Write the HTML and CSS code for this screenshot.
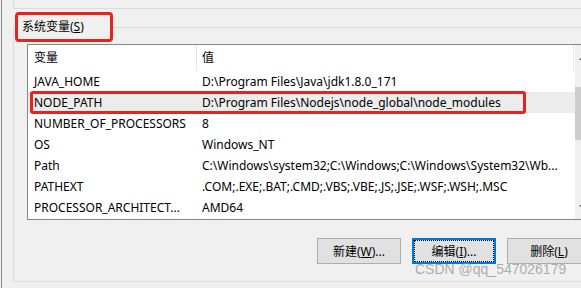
FILE: index.html
```html
<!DOCTYPE html>
<html lang="zh-CN">
<head>
<meta charset="utf-8">
<title>系统变量</title>
<link rel="stylesheet" href="styles.css">
</head>
<body>
<div class="window">
  <div class="prev-group"></div>
  <fieldset class="group">
    <legend class="group-title">系统变量(<u>S</u>)</legend>
    <div class="listview">
      <div class="lv-main">
        <div class="lv-header"><div class="col1">变量</div><div class="col2">值</div></div>
        <div class="lv-row"><div class="col1">JAVA_HOME</div><div class="col2">D:\Program Files\Java\jdk1.8.0_171</div></div>
        <div class="lv-row selected"><div class="col1">NODE_PATH</div><div class="col2">D:\Program Files\Nodejs\node_global\node_modules</div><span class="highlight"></span></div>
        <div class="lv-row"><div class="col1">NUMBER_OF_PROCESSORS</div><div class="col2">8</div></div>
        <div class="lv-row"><div class="col1">OS</div><div class="col2">Windows_NT</div></div>
        <div class="lv-row"><div class="col1">Path</div><div class="col2">C:\Windows\system32;C:\Windows;C:\Windows\System32\Wb...</div></div>
        <div class="lv-row"><div class="col1">PATHEXT</div><div class="col2">.COM;.EXE;.BAT;.CMD;.VBS;.VBE;.JS;.JSE;.WSF;.WSH;.MSC</div></div>
        <div class="lv-row"><div class="col1">PROCESSOR_ARCHITECT...</div><div class="col2">AMD64</div></div>
      </div>
      <div class="scrollbar">
        <div class="sb-btn sb-up"><svg width="9" height="5" viewBox="0 0 9 5"><polygon points="0,5 4.5,0 9,5" fill="#606060"/></svg></div>
        <div class="sb-track"><div class="sb-thumb"></div></div>
        <div class="sb-btn sb-down"><svg width="9" height="5" viewBox="0 0 9 5"><polygon points="0,0 4.5,5 9,0" fill="#606060"/></svg></div>
      </div>
    </div>
    <div class="buttons">
      <button class="btn">新建(<u>W</u>)...</button>
      <button class="btn focused">编辑(<u>I</u>)...</button>
      <button class="btn">删除(<u>L</u>)</button>
    </div>
  </fieldset>
  <div class="watermark">CSDN @qq_547026179</div>
</div>
</body>
</html>
```
FILE: styles.css
```css
html, body {
  margin: 0;
  padding: 0;
  background: #f0f0f0;
}
body {
  width: 581px;
  height: 288px;
  overflow: hidden;
  font-family: "Noto Sans", "Noto Sans CJK SC", sans-serif;
  font-size: 12px;
  color: #000;
}
.window {
  position: relative;
  margin-left: 1px;
  border-left: 1px solid #8a8a8a;
  height: 288px;
  width: 640px;
}
.prev-group {
  margin-left: 11px;
  height: 8px;
  border-left: 1px solid #dcdcdc;
  border-bottom: 1px solid #dcdcdc;
}
.group {
  margin: 3px 0 0 11px;
  padding: 0 0 17px 0;
  border: 1px solid #dcdcdc;
  border-right: none;
  min-width: 0;
}
.group-title {
  box-sizing: border-box;
  width: 98px;
  height: 30px;
  margin-left: 1px;
  padding: 0 0 0 4px;
  border: 3px solid #e8221c;
  border-radius: 4px;
  line-height: 24px;
  font-size: 12px;
}
.listview {
  display: flex;
  margin: 2px 0 0 13px;
  width: 564px;
  height: 174px;
  border: 1px solid #828790;
  background: #fff;
}
.lv-main {
  width: 547px;
  display: flex;
  flex-direction: column;
}
.lv-header {
  display: flex;
  height: 26px;
  line-height: 26px;
}
.lv-header .col1 {
  border-right: 1px solid #e5e5e5;
}
.lv-header .col2 {
  border-right: 1px solid #e5e5e5;
  margin-right: 1px;
}
.lv-row {
  position: relative;
  display: flex;
  height: 21px;
  line-height: 21px;
  white-space: nowrap;
}
.col1 {
  box-sizing: border-box;
  width: 169px;
  padding-left: 6px;
  overflow: hidden;
}
.col2 {
  flex: 1;
  padding-left: 5px;
  overflow: hidden;
}
.lv-row.selected {
  background: #ececec;
}
.highlight {
  position: absolute;
  left: 2px;
  top: -1px;
  width: 496px;
  height: 23px;
  box-sizing: border-box;
  border: 3px solid #e8221c;
  border-radius: 3px;
}
.scrollbar {
  width: 17px;
  display: flex;
  flex-direction: column;
  background: #f0f0f0;
}
.sb-btn {
  height: 24px;
  display: flex;
  align-items: center;
  justify-content: center;
}
.sb-track {
  flex: 1;
}
.sb-thumb {
  margin-top: 18px;
  height: 53px;
  background: #cdcdcd;
}
.buttons {
  display: flex;
  gap: 11px;
  margin-top: 18px;
  padding-left: 303px;
}
.btn {
  box-sizing: border-box;
  width: 84px;
  height: 26px;
  padding: 0;
  background: #e1e1e1;
  border: 1px solid #adadad;
  border-radius: 0;
  font-family: "Noto Sans", "Noto Sans CJK SC", sans-serif;
  font-size: 12px;
  color: #000;
  flex: none;
}
.btn.focused {
  border: 2px solid #0078d7;
  outline: 1px dotted #000;
  outline-offset: -3px;
}
.watermark {
  position: absolute;
  left: 413px;
  top: 261px;
  font-family: "Liberation Sans", sans-serif;
  font-size: 14px;
  line-height: 16px;
  color: rgba(140, 140, 140, 0.7);
  white-space: nowrap;
}
```
